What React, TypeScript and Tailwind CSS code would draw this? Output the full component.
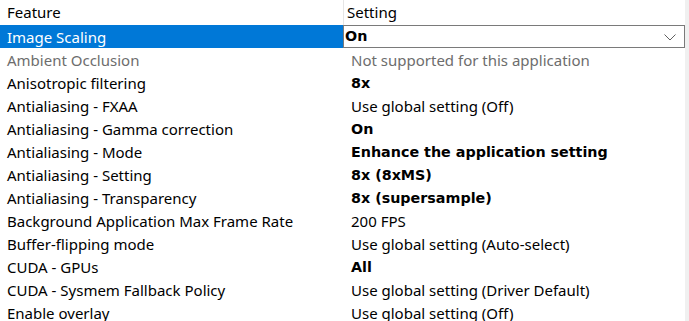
const rows: { name: string; value: string; bold?: boolean; disabled?: boolean }[] = [
  { name: 'Ambient Occlusion', value: 'Not supported for this application', disabled: true },
  { name: 'Anisotropic filtering', value: '8x', bold: true },
  { name: 'Antialiasing - FXAA', value: 'Use global setting (Off)' },
  { name: 'Antialiasing - Gamma correction', value: 'On', bold: true },
  { name: 'Antialiasing - Mode', value: 'Enhance the application setting', bold: true },
  { name: 'Antialiasing - Setting', value: '8x (8xMS)', bold: true },
  { name: 'Antialiasing - Transparency', value: '8x (supersample)', bold: true },
  { name: 'Background Application Max Frame Rate', value: '200 FPS' },
  { name: 'Buffer-flipping mode', value: 'Use global setting (Auto-select)' },
  { name: 'CUDA - GPUs', value: 'All', bold: true },
  { name: 'CUDA - Sysmem Fallback Policy', value: 'Use global setting (Driver Default)' },
  { name: 'Enable overlay', value: 'Use global setting (Off)' },
]

const regular = 'font-["Noto_Sans",sans-serif] text-[15px]'
const bold = 'font-["DejaVu_Sans",sans-serif] text-[14.3px] font-bold'

export default function App() {
  return (
    <div className="flex h-[321px] w-[689px] overflow-hidden bg-white text-black">
      <div className="flex-1">
        <div className="flex h-[25px] items-center">
          <div className={`w-[343px] pl-[7px] ${regular}`}>Feature</div>
          <div className={`h-full border-l border-[#e5e5e5] pl-[3px] leading-[25px] ${regular}`}>Setting</div>
        </div>
        <div className="flex h-[23px]">
          <div className={`flex w-[343px] items-center bg-[#0078d7] pt-[2px] pl-[7px] text-white ${regular}`}>Image Scaling</div>
          <div className="flex flex-1 items-center justify-between border border-[#7a7a7a] pt-[1px] pl-[1px] pr-[8px]">
            <span className={bold}>On</span>
            <svg width="12" height="7" viewBox="0 0 12 7" fill="none" stroke="#606060" strokeWidth="1">
              <path d="M0.5 0.5 L6 6 L11.5 0.5" />
            </svg>
          </div>
        </div>
        {rows.map((r) => (
          <div key={r.name} className="flex h-[23px] items-center pt-[2px]">
            <div className={`w-[343px] pl-[7px] ${regular} ${r.disabled ? 'text-[#6d6d6d]' : ''}`}>{r.name}</div>
            <div className={`pl-[8px] ${r.bold ? bold : regular} ${r.disabled ? 'text-[#6d6d6d]' : ''}`}>{r.value}</div>
          </div>
        ))}
      </div>
      <div className="w-[4px] bg-[#f0f0f0]" />
    </div>
  )
}
